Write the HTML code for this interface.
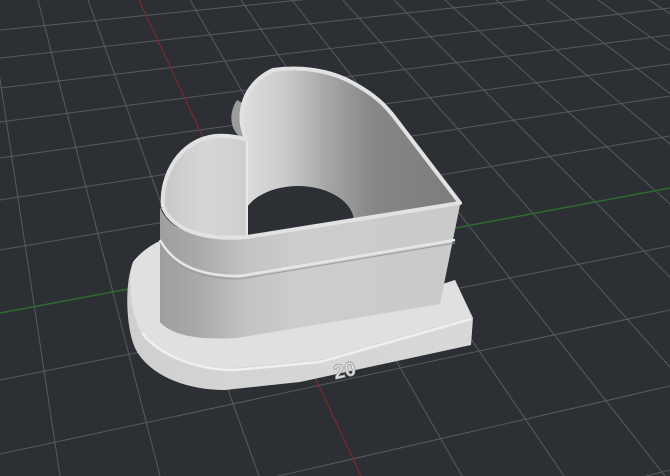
<!DOCTYPE html>
<html><head><meta charset="utf-8"><style>
html,body{margin:0;padding:0;background:#2c3034;overflow:hidden;width:670px;height:476px}
svg{display:block}
</style></head><body>
<svg width="670" height="476" viewBox="0 0 670 476" xmlns="http://www.w3.org/2000/svg" style="overflow:hidden">
<defs>
<linearGradient id="back" x1="240" y1="0" x2="460" y2="0" gradientUnits="userSpaceOnUse">
<stop offset="0" stop-color="#dedede"/><stop offset="0.2" stop-color="#cbcbcb"/>
<stop offset="0.4" stop-color="#a6a6a6"/><stop offset="0.6" stop-color="#878787"/>
<stop offset="1" stop-color="#7c7c7c"/></linearGradient>
<linearGradient id="lobe" x1="163" y1="0" x2="247" y2="0" gradientUnits="userSpaceOnUse">
<stop offset="0" stop-color="#c8c8c8"/><stop offset="0.5" stop-color="#d6d6d6"/><stop offset="1" stop-color="#cfcfcf"/></linearGradient>
<linearGradient id="outer" x1="160" y1="0" x2="440" y2="0" gradientUnits="userSpaceOnUse">
<stop offset="0" stop-color="#9e9e9e"/><stop offset="0.15" stop-color="#ababab"/>
<stop offset="0.3" stop-color="#c2c2c2"/><stop offset="0.5" stop-color="#cdcdcd"/><stop offset="1" stop-color="#cacaca"/></linearGradient>
<linearGradient id="baseside" x1="128" y1="0" x2="473" y2="0" gradientUnits="userSpaceOnUse">
<stop offset="0" stop-color="#cfcfcf"/><stop offset="0.3" stop-color="#d4d4d4"/><stop offset="1" stop-color="#d8d8d8"/></linearGradient>
<clipPath id="inner"><path d="M163,207 C160,175 180,140 215,136 C230,135 242,138 247,140 C236,120 240,85 273,70 C300,66 330,70 353,83 C375,95 385,105 395,118 L460,203 L247,237 C215,240 175,235 163,207 Z"/></clipPath>
</defs>
<g stroke="#575b60" stroke-width="1">
<line x1="-63" y1="0" x2="-41" y2="476"/><line x1="-12" y1="0" x2="60" y2="476"/>
<line x1="38" y1="0" x2="160" y2="476"/><line x1="88" y1="0" x2="259" y2="476"/>
<line x1="190" y1="0" x2="462" y2="476"/><line x1="241" y1="0" x2="564" y2="476"/>
<line x1="292" y1="0" x2="665" y2="476"/><line x1="343" y1="0" x2="767" y2="476"/>
<line x1="394" y1="0" x2="868" y2="476"/><line x1="445" y1="0" x2="970" y2="476"/>
<line x1="496" y1="0" x2="1071" y2="476"/><line x1="547" y1="0" x2="1173" y2="476"/>
<line x1="598" y1="0" x2="1274" y2="476"/><line x1="649" y1="0" x2="1376" y2="476"/>
<line x1="0" y1="30" x2="670" y2="-37"/><line x1="0" y1="58" x2="670" y2="-16"/>
<line x1="0" y1="88" x2="670" y2="8"/><line x1="0" y1="122" x2="670" y2="35"/>
<line x1="0" y1="158" x2="670" y2="64"/><line x1="0" y1="200" x2="670" y2="96"/>
<line x1="0" y1="250" x2="670" y2="136"/><line x1="0" y1="380" x2="670" y2="246"/>
<line x1="0" y1="454" x2="670" y2="310"/><line x1="0" y1="540" x2="670" y2="386"/>
<line x1="0" y1="640" x2="670" y2="470"/>
</g>
<line x1="139" y1="0" x2="361" y2="476" stroke="#7a2a2e" stroke-width="1.2"/>
<line x1="0" y1="313" x2="670" y2="188" stroke="#2f6a30" stroke-width="1.5"/>
<!-- base -->
<path d="M133,262 C150,240 180,232 200,230 L440,285 L455,280 L473,318 L471,345 L300,382 L225,390 C185,390 150,375 136,350 C126,330 124,285 133,262 Z" fill="url(#baseside)"/>
<path d="M133,262 C150,240 180,232 200,230 L440,285 L455,280 L471,317 L320,360 L232,368 C192,368 155,352 140,330 C130,310 128,280 133,262 Z" fill="#e0e0e0"/>
<path d="M142,333 C160,356 197,370 235,370 L320,362 L471,319" fill="none" stroke="#f0f0f0" stroke-width="2.5"/>
<!-- outer walls -->
<path d="M160,207 L160,322 C172,336 200,340 237,338 L440,304 L460,205 L247,237 C210,240 170,235 160,207 Z" fill="url(#outer)"/>
<path d="M160,240 C175,268 205,276 240,276 L455,240" fill="none" stroke="#e6e6e6" stroke-width="2.5"/>
<path d="M160,243 C175,271 205,279 240,279 L455,243" fill="none" stroke="#9a9a9a" stroke-width="1"/>
<!-- right lobe outer part visible between lobes -->
<path d="M237,100 C229,112 229,128 240,137 L247,140 L244,104 Z" fill="#9c9c9c"/>
<!-- interior -->
<g clip-path="url(#inner)">
<rect x="150" y="60" width="320" height="190" fill="url(#back)"/>
<ellipse cx="298" cy="222" rx="56" ry="36" fill="#2c3034"/>
<rect x="150" y="130" width="97" height="120" fill="url(#lobe)"/>
<line x1="247" y1="140" x2="247" y2="240" stroke="#e8e8e8" stroke-width="2"/>
</g>
<path d="M163,207 C160,175 180,140 215,136 C230,135 242,138 247,140 C236,120 240,85 273,70 C300,66 330,70 353,83 C375,95 385,105 395,118 L460,203 L247,237 C215,240 175,235 163,207" fill="none" stroke="#e2e2e2" stroke-width="4" stroke-linejoin="round"/>
<text x="333" y="377" font-family="Liberation Sans, sans-serif" font-size="20" font-weight="bold" fill="#e4e4e4" stroke="#9a9a9a" stroke-width="0.8" transform="rotate(-12 345 368)">20</text>
</svg>
</body></html>
